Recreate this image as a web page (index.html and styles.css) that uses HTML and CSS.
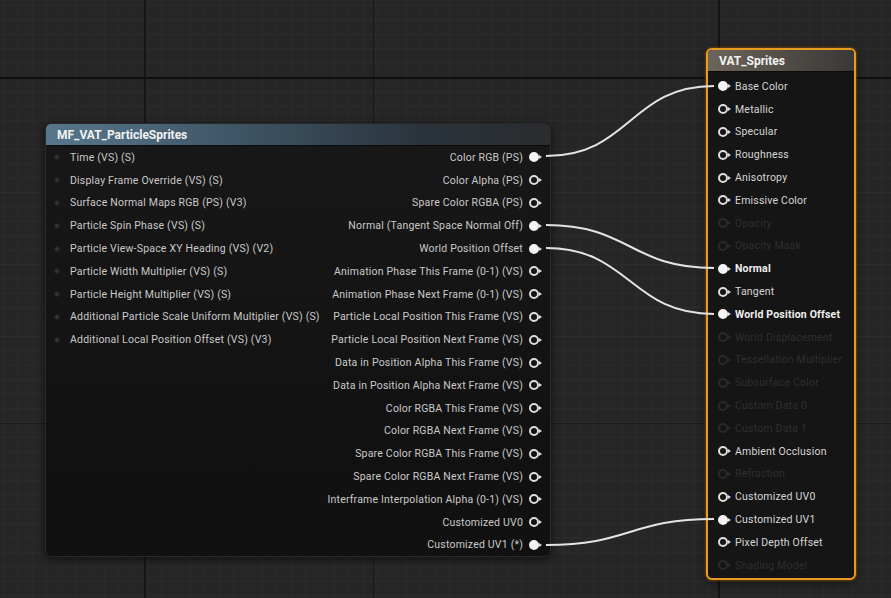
FILE: index.html
```html
<!DOCTYPE html>
<html>
<head>
<meta charset="UTF-8">
<title>VAT_Sprites</title>
<link rel="stylesheet" href="styles.css">
</head>
<body>
<div class="graph">

	<svg class="wires" width="891" height="598">
		<path d="M546 156 C 630 156, 630 86, 714 86"/>
		<path d="M546 225 C 630 225, 630 268, 714 268"/>
		<path d="M546 248 C 630 248, 630 314, 714 314"/>
		<path d="M546 545 C 630 545, 630 519, 714 519"/>
	</svg>

	<div class="node func_node">
		<div class="node_head">MF_VAT_ParticleSprites</div>
		<div class="node_body">
			<div class="col_in">
				<div class="row"><span class="pin_in"></span>Time (VS) (S)</div>
				<div class="row"><span class="pin_in"></span>Display Frame Override (VS) (S)</div>
				<div class="row"><span class="pin_in"></span>Surface Normal Maps RGB (PS) (V3)</div>
				<div class="row"><span class="pin_in"></span>Particle Spin Phase (VS) (S)</div>
				<div class="row"><span class="pin_in"></span>Particle View-Space XY Heading (VS) (V2)</div>
				<div class="row"><span class="pin_in"></span>Particle Width Multiplier (VS) (S)</div>
				<div class="row"><span class="pin_in"></span>Particle Height Multiplier (VS) (S)</div>
				<div class="row"><span class="pin_in"></span>Additional Particle Scale Uniform Multiplier (VS) (S)</div>
				<div class="row"><span class="pin_in"></span>Additional Local Position Offset (VS) (V3)</div>
			</div>
			<div class="col_out">
				<div class="row">Color RGB (PS)<span class="pin on"></span></div>
				<div class="row">Color Alpha (PS)<span class="pin"></span></div>
				<div class="row">Spare Color RGBA (PS)<span class="pin"></span></div>
				<div class="row">Normal (Tangent Space Normal Off)<span class="pin on"></span></div>
				<div class="row">World Position Offset<span class="pin on"></span></div>
				<div class="row">Animation Phase This Frame (0-1) (VS)<span class="pin"></span></div>
				<div class="row">Animation Phase Next Frame (0-1) (VS)<span class="pin"></span></div>
				<div class="row">Particle Local Position This Frame (VS)<span class="pin"></span></div>
				<div class="row">Particle Local Position Next Frame (VS)<span class="pin"></span></div>
				<div class="row">Data in Position Alpha This Frame (VS)<span class="pin"></span></div>
				<div class="row">Data in Position Alpha Next Frame (VS)<span class="pin"></span></div>
				<div class="row">Color RGBA This Frame (VS)<span class="pin"></span></div>
				<div class="row">Color RGBA Next Frame (VS)<span class="pin"></span></div>
				<div class="row">Spare Color RGBA This Frame (VS)<span class="pin"></span></div>
				<div class="row">Spare Color RGBA Next Frame (VS)<span class="pin"></span></div>
				<div class="row">Interframe Interpolation Alpha (0-1) (VS)<span class="pin"></span></div>
				<div class="row">Customized UV0<span class="pin"></span></div>
				<div class="row">Customized UV1 (*)<span class="pin on"></span></div>
			</div>
		</div>
	</div>

	<div class="node mat_node">
		<div class="node_head">VAT_Sprites</div>
		<div class="mat_body">
			<div class="row"><span class="pin on"></span>Base Color</div>
			<div class="row"><span class="pin"></span>Metallic</div>
			<div class="row"><span class="pin"></span>Specular</div>
			<div class="row"><span class="pin"></span>Roughness</div>
			<div class="row"><span class="pin"></span>Anisotropy</div>
			<div class="row"><span class="pin"></span>Emissive Color</div>
			<div class="row off"><span class="pin"></span>Opacity</div>
			<div class="row off"><span class="pin"></span>Opacity Mask</div>
			<div class="row lit"><span class="pin on"></span>Normal</div>
			<div class="row"><span class="pin"></span>Tangent</div>
			<div class="row lit"><span class="pin on"></span>World Position Offset</div>
			<div class="row off"><span class="pin"></span>World Displacement</div>
			<div class="row off"><span class="pin"></span>Tessellation Multiplier</div>
			<div class="row off"><span class="pin"></span>Subsurface Color</div>
			<div class="row off"><span class="pin"></span>Custom Data 0</div>
			<div class="row off"><span class="pin"></span>Custom Data 1</div>
			<div class="row"><span class="pin"></span>Ambient Occlusion</div>
			<div class="row off"><span class="pin"></span>Refraction</div>
			<div class="row"><span class="pin"></span>Customized UV0</div>
			<div class="row"><span class="pin on"></span>Customized UV1</div>
			<div class="row"><span class="pin"></span>Pixel Depth Offset</div>
			<div class="row off"><span class="pin"></span>Shading Model</div>
		</div>
	</div>

</div>
</body>
</html>
```

FILE: styles.css
```css
*{
	margin:0;
	padding:0;
	box-sizing:border-box;
}
body{
	background-color:#242424;
	font-family:Roboto, "Liberation Sans", sans-serif;
}
.graph{
	position:relative;
	width:891px;
	height:598px;
	overflow:hidden;
	background-color:#262626;
	background-image:
		linear-gradient(#0f0f0f, #0f0f0f),
		linear-gradient(#1a1a1a, #1a1a1a),
		linear-gradient(#161616, #161616),
		linear-gradient(#171717, #171717),
		linear-gradient(#141414, #141414),
		linear-gradient(#2c2c2c 1px, transparent 1px),
		linear-gradient(90deg, #2b2b2b 1px, transparent 1px);
	background-size:
		100% 2px,
		100% 1px,
		2px 100%,
		1px 100%,
		2px 100%,
		14.4px 14.4px,
		14.4px 14.4px;
	background-position:
		0 77px,
		0 423px,
		144px 0,
		373px 0,
		718px 0,
		0 5px,
		3px 0;
	background-repeat:no-repeat, no-repeat, no-repeat, no-repeat, no-repeat, repeat, repeat;
}
.wires{
	position:absolute;
	top:0;
	left:0;
	z-index:2;
	pointer-events:none;
}
.wires path{
	fill:none;
	stroke:#e4e4e4;
	stroke-width:2;
}
.node{
	position:absolute;
	border-radius:6px;
	box-shadow:0 2px 8px rgba(0,0,0,0.6);
	z-index:1;
}
.node_head{
	height:22px;
	line-height:22px;
	font-size:12px;
	font-weight:bold;
	color:#f2f2f2;
	border-radius:5px 5px 0 0;
}

/* function node */
.func_node{
	left:45px;
	top:123px;
	width:506px;
	height:434px;
	background-color:#131313;
	background-image:linear-gradient(#181818, #111 80%);
	border:1px solid #2a2a2a;
}
.func_node .node_head{
	padding-left:11px;
	background:linear-gradient(to right, #58778c 0%, #3f5869 35%, #2a333b 75%, #2a2c2e 100%);
	border-bottom:1px solid #0c0c0c;
}
.node_body{
	display:flex;
	justify-content:space-between;
}
.row{
	height:22.8px;
	display:flex;
	align-items:center;
	font-size:10.5px;
	letter-spacing:0.2px;
	color:#c9c9c9;
	white-space:nowrap;
}
.col_in{
	padding-left:8px;
}
.col_in .row{
	gap:10px;
}
.pin_in{
	width:6px;
	height:6px;
	border-radius:50%;
	background-color:#333;
	border:1px solid #1e1e1e;
}
.col_out{
	padding-right:8px;
}
.col_out .row{
	justify-content:flex-end;
	gap:6px;
}
.pin{
	position:relative;
	width:10px;
	height:10px;
	border-radius:50%;
	border:2px solid #dedede;
	margin-right:3px;
	flex-shrink:0;
}
.pin::after{
	content:"";
	position:absolute;
	right:-5px;
	top:1px;
	border-left:3px solid #dedede;
	border-top:2px solid transparent;
	border-bottom:2px solid transparent;
}
.pin.on{
	background-color:#f4f4f4;
	border-color:#f4f4f4;
}

/* material result node */
.mat_node{
	left:706px;
	top:48px;
	width:150px;
	height:532px;
	background-color:#151515;
	border:2px solid #e89b1c;
	box-shadow:0 0 3px #a8650c, 0 2px 8px rgba(0,0,0,0.6);
}
.mat_node .node_head{
	padding-left:11px;
	background:linear-gradient(to right, #6c655c, #4d4944 60%, #3a3836);
	border-bottom:1px solid #0c0c0c;
	border-radius:4px 4px 0 0;
}
.mat_body{
	padding-top:3px;
	padding-left:10px;
}
.mat_body .row{
	gap:4px;
	color:#d6d6d6;
}
.mat_body .row.lit{
	color:#f0f0f0;
	font-weight:bold;
}
.mat_body .row.off{
	color:#2f2f2f;
}
.mat_body .row.off .pin{
	border-color:#2a2a2a;
}
.mat_body .row.off .pin::after{
	border-left-color:#2a2a2a;
}
```
